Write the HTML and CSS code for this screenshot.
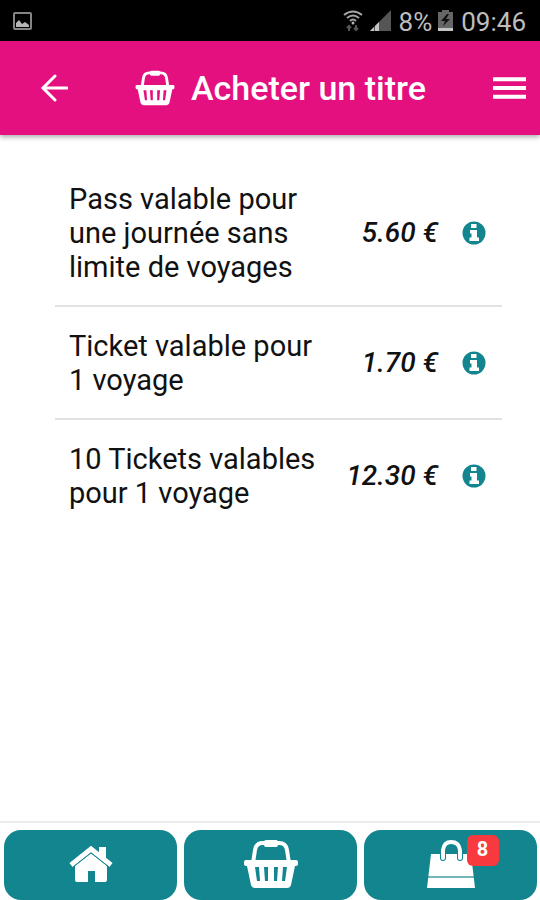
FILE: index.html
```html
<!DOCTYPE html>
<html lang="fr">
<head>
<meta charset="utf-8">
<meta name="viewport" content="width=device-width, initial-scale=1">
<title>Acheter un titre</title>
<link rel="stylesheet" href="styles.css">
</head>
<body>
<svg class="defs" aria-hidden="true">
  <symbol id="basket" viewBox="0 0 54 50">
    <path d="M9 24L11 11Q12 4 19 4H35Q42 4 43 11L45 24" fill="none" stroke="currentColor" stroke-width="4"/>
    <rect x="20" y="1" width="14" height="7" rx="2" fill="currentColor"/>
    <path fill="currentColor" fill-rule="evenodd" d="M2 21H52Q54 21 54 23V25Q54 27 51 27L47 46Q46 49 43 49H11Q8 49 7 46L3 27Q0 27 0 25V23Q0 21 2 21ZM11 28L13 42H16L15 28ZM20 28L21 42H24V28ZM30 28V42H33L34 28ZM39 28L38 42H41L43 28Z"/>
  </symbol>
  <symbol id="info" viewBox="0 0 24 24">
    <circle cx="12" cy="12" r="11.5" fill="#12858f"/>
    <path fill="#fff" d="M9 3H14.500V7H9ZM8 9H15V16.500H17V20H7.500V16.500H9.500V12.500H8Z"/>
  </symbol>
</svg>
<div class="status">
  <svg class="status-image" viewBox="0 0 20 18" aria-hidden="true"><rect x="1" y="1" width="17" height="16" rx="1" fill="none" stroke="#858585" stroke-width="2"/><path d="M3 15V11L6 8L9 12L12 10L16 13V15Z" fill="#b5b5b5"/></svg>
  <svg class="status-wifi" viewBox="0 0 20 22" aria-hidden="true"><g fill="none" stroke="#a3a3a3" stroke-width="2"><path d="M1 5Q10 -2 19 5"/><path d="M4 8Q10 3 16 8"/><path d="M7 11Q10 8 13 11"/></g><circle cx="10" cy="13" r="1.500" fill="#b5b5b5"/><path d="M6 21V15M4 18L6 16L8 18M13 15V21M11 18L13 20L15 18" fill="none" stroke="#555" stroke-width="2"/></svg>
  <svg class="status-signal" viewBox="0 0 21 21" aria-hidden="true"><path d="M21 0V21H0Z" fill="#555"/><path d="M0 21L4 17V21ZM5 16L9 12V21H5Z" fill="#c4c4c4"/></svg>
  <span class="status-percent">8%</span>
  <svg class="status-battery" viewBox="0 0 15 21" aria-hidden="true"><path d="M4 0H11V2H15V18H0V2H4Z" fill="#666"/><path d="M0 18H15V21H0Z" fill="#c4c4c4"/><path d="M9 4L3 11H7L5 16L12 9H8L11 4Z" fill="#111"/></svg>
  <span class="status-time">09:46</span>
</div>
<header class="header">
  <button class="icon-button" type="button" aria-label="Retour"><svg class="back" viewBox="0 0 28 28" aria-hidden="true"><path d="M27 14H4M15 2L3 14L15 26" fill="none" stroke="#fff" stroke-width="3" stroke-linecap="round"/></svg></button>
  <h1 class="title"><svg class="title-basket" aria-hidden="true"><use href="#basket"/></svg>Acheter un titre</h1>
  <button class="icon-button" type="button" aria-label="Menu"><svg class="menu" viewBox="0 0 34 24" aria-hidden="true"><path d="M0 3H34M0 12H34M0 21H34" stroke="#fff" stroke-width="4"/></svg></button>
</header>
<main class="content">
  <ul class="tickets">
    <li class="ticket"><span class="name">Pass valable pour une journée sans limite de voyages</span><span class="price">5.60 €</span><button class="icon-button" type="button" aria-label="Informations"><svg class="info" aria-hidden="true"><use href="#info"/></svg></button></li>
    <li class="ticket"><span class="name">Ticket valable pour 1 voyage</span><span class="price">1.70 €</span><button class="icon-button" type="button" aria-label="Informations"><svg class="info" aria-hidden="true"><use href="#info"/></svg></button></li>
    <li class="ticket"><span class="name">10 Tickets valables pour 1 voyage</span><span class="price">12.30 €</span><button class="icon-button" type="button" aria-label="Informations"><svg class="info" aria-hidden="true"><use href="#info"/></svg></button></li>
  </ul>
</main>
<nav class="tabs">
  <button class="tab" type="button" aria-label="Accueil"><svg class="home" viewBox="0 0 44 36" aria-hidden="true"><path d="M2 19L22 3L42 19" fill="none" stroke="#fff" stroke-width="5"/><path d="M30 1H37V14L30 9ZM6 20L22 7L38 20V34Q38 36 36 36H26V25H19V36H8Q6 36 6 34Z" fill="#fff"/><path d="M4 21L22 7L40 21" fill="none" stroke="#12858f" stroke-width="1"/></svg></button>
  <button class="tab" type="button" aria-label="Acheter"><svg class="tab-basket" aria-hidden="true"><use href="#basket"/></svg></button>
  <button class="tab" type="button" aria-label="Panier, 8 articles"><span class="bag-wrap"><svg class="bag" viewBox="0 0 48 50" aria-hidden="true"><path d="M4 15H44L48 49H0Z" fill="#fff"/><path d="M1 38H47" stroke="#12858f" stroke-opacity=".6" stroke-width="2"/><path d="M16 19V11Q17 3 24 3Q32 3 33 11V19" fill="none" stroke="#12858f" stroke-width="6" stroke-linecap="round"/><path d="M16 19V11Q17 3 24 3Q32 3 33 11V19" fill="none" stroke="#fff" stroke-width="4" stroke-linecap="round"/></svg><span class="badge">8</span></span></button>
</nav>
</body>
</html>
```
FILE: styles.css
```css
* { box-sizing: border-box; }
body {
  margin: 0;
  min-height: 100vh;
  display: flex;
  flex-direction: column;
  background: #fff;
  color: #111;
  font-family: Roboto, "Liberation Sans", sans-serif;
}
svg { display: block; flex: none; }
button { font: inherit; border: 0; padding: 0; cursor: pointer; }
.defs { position: absolute; width: 0; height: 0; }
.icon-button { background: none; flex: none; }
.status {
  height: 41px;
  padding: 0 14px 0 13px;
  display: flex;
  align-items: center;
  background: #000;
  color: #bdbdbd;
  font-size: 26px;
}
.status-image { width: 20px; height: 18px; margin-right: auto; }
.status-wifi { width: 20px; height: 22px; margin-right: 7px; }
.status-signal { width: 21px; height: 21px; margin-right: 8px; }
.status-percent { margin-right: 6px; padding-top: 2px; }
.status-battery { width: 15px; height: 21px; margin-right: 8px; }
.status-time { padding-top: 2px; }
.header {
  height: 94px;
  padding: 0 14px 0 40px;
  display: flex;
  align-items: center;
  justify-content: space-between;
  background: #e5107f;
  color: #fff;
  box-shadow: 0 2px 5px #0005;
}
.back { width: 28px; height: 28px; }
.title {
  margin: 0;
  display: flex;
  align-items: center;
  gap: 16px;
  font-size: 34px;
  line-height: 40px;
  font-weight: 500;
}
.title-basket { width: 40px; height: 36px; }
.menu { width: 33px; height: 24px; }
.content { flex: 1; padding: 25px 38px 0 55px; }
.tickets { list-style: none; margin: 0; padding: 0; }
.ticket {
  display: flex;
  align-items: center;
  padding: 22px 16px 21px 14px;
  border-bottom: 2px solid #e2e2e2;
}
.ticket:last-child { border-bottom: 0; }
.name { flex: 1; font-size: 29px; line-height: 34px; }
.price {
  min-width: 92px;
  margin: 0 24px;
  font-size: 28px;
  line-height: 34px;
  font-weight: 500;
  font-style: italic;
  text-align: right;
  white-space: nowrap;
}
.info { width: 24px; height: 24px; }
.tabs {
  display: flex;
  gap: 7px;
  padding: 7px 3px 0 4px;
  border-top: 2px solid #ececec;
}
.tab {
  flex: 1;
  height: 70px;
  display: flex;
  align-items: center;
  justify-content: center;
  border-radius: 17px;
  background: #12858f;
  color: #fff;
}
.home { width: 44px; height: 36px; }
.tab-basket { width: 54px; height: 50px; }
.bag-wrap { position: relative; }
.bag { width: 48px; height: 50px; }
.home, .tab-basket, .bag-wrap { margin-bottom: 2px; }
.badge {
  position: absolute;
  top: -4px;
  left: 40px;
  width: 32px;
  height: 31px;
  border-radius: 6px;
  background: #f8393d;
  font-size: 20px;
  line-height: 28px;
  font-weight: 700;
}
```
